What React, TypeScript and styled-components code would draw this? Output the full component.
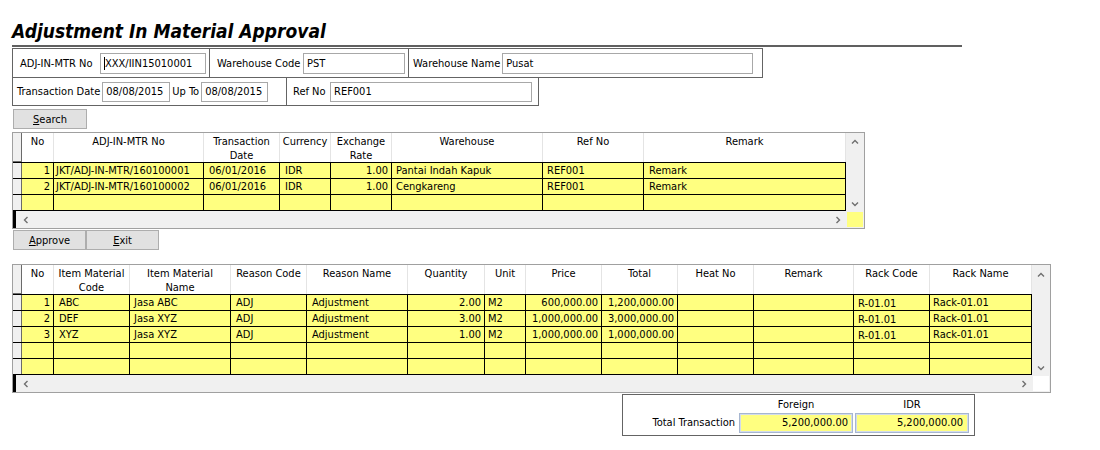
import React from "react";
import styled, { createGlobalStyle } from "styled-components";

const YELLOW = "#ffff80";

const GlobalStyle = createGlobalStyle`
  html, body { margin: 0; padding: 0; background: #ffffff; }
  body {
    font-family: "DejaVu Sans Condensed", "DejaVu Sans", "Liberation Sans", sans-serif;
    font-stretch: condensed;
    font-size: 11px;
    color: #000000;
  }
`;

const Page = styled.div`
  padding: 20px 0 0 12px;
  display: flex;
  flex-direction: column;
  align-items: flex-start;
`;

const Title = styled.h1`
  margin: 0;
  font-family: "DejaVu Sans Condensed", "DejaVu Sans", sans-serif;
  font-stretch: condensed;
  font-weight: bold;
  font-style: italic;
  font-size: 19px;
  line-height: 23px;
  height: 23px;
  white-space: nowrap;
`;

const Rule = styled.div`
  width: 950px;
  height: 2px;
  background: #606060;
  margin: 2px 0 1px 0;
`;

const FilterRow = styled.div<{ $top?: boolean }>`
  display: flex;
  border: 1px solid #646464;
  border-top-width: ${(p) => (p.$top ? 1 : 0)}px;
`;

const FilterCell = styled.div<{ $w: number; $h: number; $pl: number; $pr: number; $last?: boolean }>`
  display: flex;
  align-items: center;
  gap: 2px;
  box-sizing: border-box;
  width: ${(p) => p.$w}px;
  height: ${(p) => p.$h}px;
  padding: 0 ${(p) => p.$pr}px 0 ${(p) => p.$pl}px;
  border-right: ${(p) => (p.$last ? "none" : "1px solid #646464")};
`;

const FieldLabel = styled.span<{ $fixed?: boolean }>`
  flex: ${(p) => (p.$fixed ? "none" : "1")};
  white-space: nowrap;
`;

const TextBox = styled.div<{ $w: number; $h: number }>`
  display: flex;
  align-items: center;
  box-sizing: border-box;
  flex: none;
  width: ${(p) => p.$w}px;
  height: ${(p) => p.$h}px;
  border: 1px solid #a8a8a8;
  background: #ffffff;
  padding: 0 3px;
  white-space: nowrap;
  overflow: hidden;
`;

const Caret = styled.span`
  display: inline-block;
  width: 1px;
  height: 13px;
  background: #000000;
`;

const ButtonBar = styled.div<{ $mt: number; $mb?: number }>`
  display: flex;
  margin: ${(p) => p.$mt}px 0 ${(p) => p.$mb ?? 0}px 1px;
`;

const Button = styled.button<{ $w: number }>`
  display: flex;
  align-items: center;
  justify-content: center;
  box-sizing: border-box;
  width: ${(p) => p.$w}px;
  height: 20px;
  margin: 0;
  padding: 0;
  border: 1px solid #adadad;
  background: #e1e1e1;
  color: #000000;
  font-family: inherit;
  font-stretch: condensed;
  font-size: 11px;
`;

const Grid = styled.div<{ $w: number }>`
  display: flex;
  flex-direction: column;
  box-sizing: border-box;
  width: ${(p) => p.$w}px;
  border: 1px solid #a0a0a0;
  background: #ffffff;
`;

const GridUpper = styled.div`
  display: flex;
`;

const Sheet = styled.div`
  display: flex;
  flex-direction: column;
`;

const HeaderRow = styled.div`
  display: flex;
  height: 29px;
  background: #ffffff;
`;

const IndicatorHead = styled.div`
  box-sizing: border-box;
  width: 9px;
  background: #f0f0f0;
  border-right: 1px solid #6a6a6a;
  border-bottom: 1px solid #6a6a6a;
`;

const HeadCell = styled.div<{ $w: number }>`
  box-sizing: border-box;
  width: ${(p) => p.$w}px;
  padding-top: 2px;
  line-height: 14px;
  text-align: center;
  white-space: nowrap;
  overflow: hidden;
  border-right: 1px solid #e4e4e4;
`;

const Rows = styled.div`
  border-bottom: 1px solid #000000;
`;

const DataRow = styled.div`
  display: flex;
  box-sizing: border-box;
  height: 16px;
  border-top: 1px solid #000000;
`;

const IndicatorCell = styled.div`
  box-sizing: border-box;
  width: 9px;
  background: #f0f0f0;
  border-right: 1px solid #6a6a6a;
`;

const Cell = styled.div<{ $w: number; $align: "left" | "right"; $pl: number; $dy: number }>`
  box-sizing: border-box;
  width: ${(p) => p.$w}px;
  background: ${YELLOW};
  border-right: 1px solid #000000;
  text-align: ${(p) => p.$align};
  padding: ${(p) => p.$dy}px ${(p) => (p.$align === "right" ? 3 : 0)}px 0 ${(p) => (p.$align === "left" ? p.$pl : 0)}px;
  line-height: 15px;
  white-space: nowrap;
  overflow: hidden;
`;

const VScroll = styled.div<{ $pt: number }>`
  display: flex;
  flex-direction: column;
  justify-content: space-between;
  align-items: center;
  box-sizing: border-box;
  width: 18px;
  padding: ${(p) => p.$pt}px 0 4px 0;
  background: #f0f0f0;
`;

const HScrollRow = styled.div`
  display: flex;
  height: 17px;
`;

const HScroll = styled.div`
  flex: 1;
  display: flex;
  align-items: center;
  justify-content: space-between;
  box-sizing: border-box;
  border-left: 3px solid #000000;
  padding: 0 5px 0 7px;
  background: #f0f0f0;
`;

const Corner = styled.div<{ $bg: string }>`
  width: 18px;
  box-sizing: border-box;
  border: 1px solid #f0f0f0;
  background: ${(p) => p.$bg};
`;

const TotalsBox = styled.div`
  display: grid;
  grid-template-columns: 114px 114px 114px;
  grid-template-rows: 16px 20px;
  column-gap: 2px;
  box-sizing: border-box;
  width: 353px;
  margin: 1px 0 0 610px;
  padding: 2px 5px 2px 0;
  border: 1px solid #646464;
`;

const TotalsHead = styled.div`
  text-align: center;
  line-height: 16px;
`;

const TotalsLabel = styled.div`
  text-align: right;
  padding-right: 2px;
  line-height: 20px;
  white-space: nowrap;
`;

const TotalInput = styled.div<{ $pr: number }>`
  box-sizing: border-box;
  height: 20px;
  border: 1px solid #a6b6d0;
  box-shadow: inset 0 0 0 1px #d3dcea;
  background: ${YELLOW};
  text-align: right;
  padding-right: ${(p) => p.$pr}px;
  line-height: 18px;
`;

type Dir = "up" | "down" | "left" | "right";
const pts: Record<Dir, string> = {
  up: "1,4.5 4,1.5 7,4.5",
  down: "1,1.5 4,4.5 7,1.5",
  left: "4.5,1 1.5,4 4.5,7",
  right: "1.5,1 4.5,4 1.5,7",
};
function Chevron({ dir }: { dir: Dir }) {
  const vertical = dir === "up" || dir === "down";
  return (
    <svg width={vertical ? 8 : 6} height={vertical ? 6 : 8} viewBox={vertical ? "0 0 8 6" : "0 0 6 8"}>
      <polyline points={pts[dir]} fill="none" stroke="#6f6f6f" strokeWidth="1.4" />
    </svg>
  );
}

type Col = { head: string[]; w: number; align: "left" | "right"; pl?: number };

type GridProps = {
  width: number;
  cols: Col[];
  rows: (string[] | null)[];
  vPad: number;
  corner: string;
  dy?: number[];
};

function DataGrid({ width, cols, rows, vPad, corner, dy }: GridProps) {
  return (
    <Grid $w={width}>
      <GridUpper>
        <Sheet>
          <HeaderRow>
            <IndicatorHead />
            {cols.map((c, i) => (
              <HeadCell key={i} $w={c.w}>
                {c.head.map((h, j) => (
                  <div key={j}>{h}</div>
                ))}
              </HeadCell>
            ))}
          </HeaderRow>
          <Rows>
            {rows.map((r, ri) => (
              <DataRow key={ri}>
                <IndicatorCell />
                {cols.map((c, ci) => (
                  <Cell key={ci} $w={c.w} $align={c.align} $pl={c.pl ?? 4} $dy={dy ? dy[ci] : 0}>
                    {r ? r[ci] : ""}
                  </Cell>
                ))}
              </DataRow>
            ))}
          </Rows>
        </Sheet>
        <VScroll $pt={vPad}>
          <Chevron dir="up" />
          <Chevron dir="down" />
        </VScroll>
      </GridUpper>
      <HScrollRow>
        <HScroll>
          <Chevron dir="left" />
          <Chevron dir="right" />
        </HScroll>
        <Corner $bg={corner} />
      </HScrollRow>
    </Grid>
  );
}

const approvalCols: Col[] = [
  { head: ["No"], w: 32, align: "right" },
  { head: ["ADJ-IN-MTR No"], w: 150, align: "left", pl: 2 },
  { head: ["Transaction", "Date"], w: 76, align: "left", pl: 5 },
  { head: ["Currency"], w: 51, align: "left", pl: 5 },
  { head: ["Exchange", "Rate"], w: 61, align: "right" },
  { head: ["Warehouse"], w: 151, align: "left", pl: 4 },
  { head: ["Ref No"], w: 101, align: "left", pl: 4 },
  { head: ["Remark"], w: 202, align: "left", pl: 5 },
];

const approvalRows: (string[] | null)[] = [
  ["1", "JKT/ADJ-IN-MTR/160100001", "06/01/2016", "IDR", "1.00", "Pantai Indah Kapuk", "REF001", "Remark"],
  ["2", "JKT/ADJ-IN-MTR/160100002", "06/01/2016", "IDR", "1.00", "Cengkareng", "REF001", "Remark"],
  null,
];

const detailCols: Col[] = [
  { head: ["No"], w: 32, align: "right" },
  { head: ["Item Material", "Code"], w: 76, align: "left", pl: 5 },
  { head: ["Item Material", "Name"], w: 101, align: "left", pl: 4 },
  { head: ["Reason Code"], w: 76, align: "left", pl: 5 },
  { head: ["Reason Name"], w: 101, align: "left", pl: 5 },
  { head: ["Quantity"], w: 77, align: "right" },
  { head: ["Unit"], w: 41, align: "left", pl: 3 },
  { head: ["Price"], w: 76, align: "right" },
  { head: ["Total"], w: 76, align: "right" },
  { head: ["Heat No"], w: 76, align: "left" },
  { head: ["Remark"], w: 100, align: "left" },
  { head: ["Rack Code"], w: 76, align: "left", pl: 4 },
  { head: ["Rack Name"], w: 102, align: "left", pl: 3 },
];

const detailRows: (string[] | null)[] = [
  ["1", "ABC", "Jasa ABC", "ADJ", "Adjustment", "2.00", "M2", "600,000.00", "1,200,000.00", "", "", "R-01.01", "Rack-01.01"],
  ["2", "DEF", "Jasa XYZ", "ADJ", "Adjustment", "3.00", "M2", "1,000,000.00", "3,000,000.00", "", "", "R-01.01", "Rack-01.01"],
  ["3", "XYZ", "Jasa XYZ", "ADJ", "Adjustment", "1.00", "M2", "1,000,000.00", "1,000,000.00", "", "", "R-01.01", "Rack-01.01"],
  null,
  null,
];

export default function App() {
  return (
    <>
      <GlobalStyle />
      <Page>
        <Title>Adjustment In Material Approval</Title>
        <Rule />

        <FilterRow $top>
          <FilterCell $w={197} $h={28} $pl={7} $pr={3}>
            <FieldLabel>ADJ-IN-MTR No</FieldLabel>
            <TextBox $w={106} $h={21}>
              <Caret />
              XXX/IIN15010001
            </TextBox>
          </FilterCell>
          <FilterCell $w={199} $h={28} $pl={7} $pr={3}>
            <FieldLabel>Warehouse Code</FieldLabel>
            <TextBox $w={102} $h={21}>PST</TextBox>
          </FilterCell>
          <FilterCell $w={353} $h={28} $pl={4} $pr={12} $last>
            <FieldLabel>Warehouse Name</FieldLabel>
            <TextBox $w={251} $h={21}>Pusat</TextBox>
          </FilterCell>
        </FilterRow>
        <FilterRow>
          <FilterCell $w={274} $h={27} $pl={4} $pr={0}>
            <FieldLabel $fixed>Transaction Date</FieldLabel>
            <TextBox $w={68} $h={20}>08/08/2015</TextBox>
            <FieldLabel $fixed>Up To</FieldLabel>
            <TextBox $w={67} $h={20}>08/08/2015</TextBox>
          </FilterCell>
          <FilterCell $w={251} $h={27} $pl={6} $pr={6} $last>
            <FieldLabel>Ref No</FieldLabel>
            <TextBox $w={202} $h={20}>REF001</TextBox>
          </FilterCell>
        </FilterRow>

        <ButtonBar $mt={3} $mb={3}>
          <Button $w={74}>
            <span><u>S</u>earch</span>
          </Button>
        </ButtonBar>

        <DataGrid width={853} cols={approvalCols} rows={approvalRows} vPad={6} corner={YELLOW} />

        <ButtonBar $mt={1} $mb={14}>
          <Button $w={73}>
            <span><u>A</u>pprove</span>
          </Button>
          <Button $w={73}>
            <span><u>E</u>xit</span>
          </Button>
        </ButtonBar>

        <DataGrid
          width={1039}
          cols={detailCols}
          rows={detailRows}
          vPad={7}
          corner="#ffffff"
          dy={[0, 0, 0, 0, 0, 0, 0, 0, 0, 0, 0, 1, 0]}
        />

        <TotalsBox>
          <div />
          <TotalsHead>Foreign</TotalsHead>
          <TotalsHead>IDR</TotalsHead>
          <TotalsLabel>Total Transaction</TotalsLabel>
          <TotalInput $pr={4}>5,200,000.00</TotalInput>
          <TotalInput $pr={5}>5,200,000.00</TotalInput>
        </TotalsBox>
      </Page>
    </>
  );
}
